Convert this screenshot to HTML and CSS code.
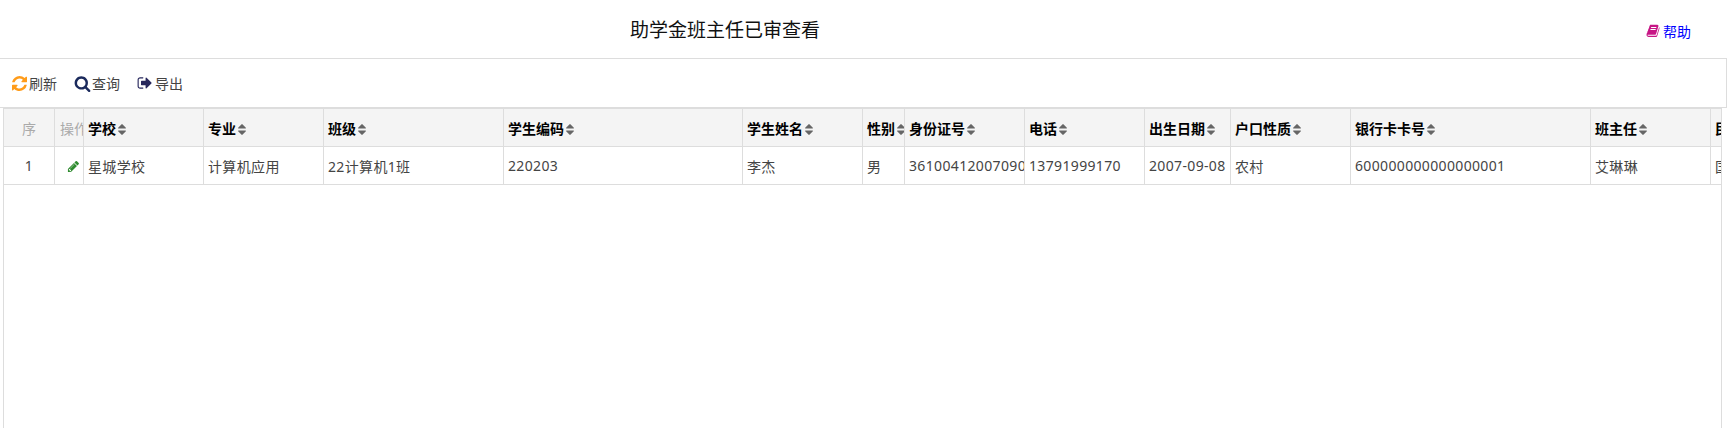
FILE: index.html
```html
<!DOCTYPE html>
<html lang="zh-CN">
  <head>
    <meta charset="utf-8" />
    <title>助学金班主任已审查看</title>
    <link rel="stylesheet" href="styles.css">
  </head>

  <body>
    <svg class="icon-defs" xmlns="http://www.w3.org/2000/svg">
      <symbol id="i-refresh" viewBox="0 0 1536 1536"><path d="M1511 928q0 5-1 7-64 268-268 434.5t-478 166.5q-146 0-282.5-55t-243.5-157l-129 129q-19 19-45 19t-45-19-19-45v-448q0-26 19-45t45-19h448q26 0 45 19t19 45-19 45l-137 137q71 66 161 102t187 36q134 0 250-65t186-179q11-17 53-117 8-23 30-23h192q13 0 22.5 9.5t9.5 22.5zm25-800v448q0 26-19 45t-45 19h-448q-26 0-45-19t-19-45 19-45l138-138q-148-137-349-137-134 0-250 65t-186 179q-11 17-53 117-8 23-30 23h-199q-13 0-22.5-9.5t-9.5-22.5v-7q65-268 270-434.5t480-166.5q146 0 284 55.5t245 156.5l130-129q19-19 45-19t45 19 19 45z"/></symbol>
      <symbol id="i-search" viewBox="0 0 1792 1792"><path d="M1216 832q0-185-131.5-316.5t-316.5-131.5-316.5 131.5-131.5 316.5 131.5 316.5 316.5 131.5 316.5-131.5 131.5-316.5zm512 832q0 52-38 90t-90 38q-54 0-90-38l-343-342q-179 124-399 124-143 0-273.5-55.5t-225-150-150-225-55.5-273.5 55.5-273.5 150-225 225-150 273.5-55.5 273.5 55.5 225 150 150 225 55.5 273.5q0 220-124 399l343 343q37 37 37 90z"/></symbol>
      <symbol id="i-export" viewBox="0 0 1792 1792"><path d="M704 1440q0 4 1 20t.5 26.5-3 23.5-10 19.5-20.5 6.5h-320q-119 0-203.5-84.5t-84.5-203.5v-704q0-119 84.5-203.5t203.5-84.5h320q13 0 22.5 9.5t9.5 22.5q0 4 1 20t.5 26.5-3 23.5-10 19.5-20.5 6.5h-320q-66 0-113 47t-47 113v704q0 66 47 113t113 47h312l11.5 1 11.5 3 8 5.5 7 9 2 13.5zm928-544q0 26-19 45l-544 544q-19 19-45 19t-45-19-19-45v-288h-448q-26 0-45-19t-19-45v-384q0-26 19-45t45-19h448v-288q0-26 19-45t45-19 45 19l544 544q19 19 19 45z"/></symbol>
      <symbol id="i-pencil" viewBox="0 0 1792 1792"><path d="M491 1536l91-91-235-235-91 91v107h128v128h107zm523-928q0-22-22-22-10 0-17 7l-542 542q-7 7-7 17 0 22 22 22 10 0 17-7l542-542q7-7 7-17zm-54-192l416 416-832 832h-416v-416zm683 96q0 53-37 90l-166 166-416-416 166-165q36-38 90-38 53 0 91 38l235 234q37 39 37 91z"/></symbol>
      <symbol id="i-book" viewBox="0 0 1792 1792"><path d="M1703 478q40 57 18 129l-275 906q-19 64-76.500 107.500t-122.500 43.500h-923q-77 0-148.500-53.500t-99.500-131.500q-24-67-2-127 0-4 3-27t4-37q1-8-3-21.500t-3-19.500q2-11 8-21t16.500-23.500 16.500-23.500q23-38 45-91.500t30-91.500q3-10 .5-30t-.5-28q3-11 17-28t17-23q21-36 42-92t25-90q1-9-2.500-32t.5-28q4-13 22-30.500t22-22.500q19-26 42.500-84.500t27.500-96.500q1-8-3-25.500t-2-26.500q2-8 9-18t18-23 17-21q8-12 16.500-35.500t15-44.500 17-45.500 20.500-37 28.500-27.500 37.500-12.500 46 5.500l-1 3q54-13 73-13h761q74 0 114 56t18 130l-274 906q-36 119-71.500 153.500t-128.500 34.500h-869q-27 0-38 15-11 16-1 43 24 70 144 70h923q29 0 56-15.500t35-41.500l300-987q7-22 5-57 38 15 59 43zm-1064 2q-4 13 2 22.500t20 9.500h608q13 0 25.500-9.500t16.500-22.500l21-64q4-13-2-22.500t-20-9.500h-608q-13 0-25.500 9.500t-16.500 22.500zm-83 256q-4 13 2 22.500t20 9.500h608q13 0 25.500-9.500t16.500-22.500l21-64q4-13-2-22.500t-20-9.500h-608q-13 0-25.500 9.500t-16.500 22.500z"/></symbol>
      <symbol id="i-sort" viewBox="384 192 1024 1408"><path d="M1408 1088q0 26-19 45l-448 448q-19 19-45 19t-45-19l-448-448q-19-19-19-45t19-45 45-19h896q26 0 45 19t19 45zm0-384q0 26-19 45t-45 19h-896q-26 0-45-19t-19-45 19-45l448-448q19-19 45-19t45 19l448 448q19 19 19 45z"/></symbol>
    </svg>

    <div class="title-bar">
      <h1 class="page-title">助学金班主任已审查看</h1>
      <a class="help-link" href="#"><svg class="icon icon-book"><use href="#i-book"/></svg>帮助</a>
    </div>

    <div class="toolbar">
      <a class="tool-btn" href="#"><svg class="icon icon-refresh"><use href="#i-refresh"/></svg>刷新</a>
      <a class="tool-btn" href="#"><svg class="icon icon-search"><use href="#i-search"/></svg>查询</a>
      <a class="tool-btn" href="#"><svg class="icon icon-export"><use href="#i-export"/></svg>导出</a>
    </div>

    <div class="grid-wrap">
      <table class="grid">
        <colgroup>
          <col class="col-seq">
          <col class="col-op">
          <col class="col-m">
          <col class="col-m">
          <col class="col-code">
          <col class="col-code-no">
          <col class="col-m">
          <col class="col-sex">
          <col class="col-m">
          <col class="col-m">
          <col class="col-date">
          <col class="col-m">
          <col class="col-l">
          <col class="col-m">
          <col class="col-m">
        </colgroup>
        <thead>
          <tr>
            <th class="plain center">序</th>
            <th class="plain">操作</th>
            <th>学校<svg class="sort"><use href="#i-sort"/></svg></th>
            <th>专业<svg class="sort"><use href="#i-sort"/></svg></th>
            <th>班级<svg class="sort"><use href="#i-sort"/></svg></th>
            <th>学生编码<svg class="sort"><use href="#i-sort"/></svg></th>
            <th>学生姓名<svg class="sort"><use href="#i-sort"/></svg></th>
            <th>性别<svg class="sort"><use href="#i-sort"/></svg></th>
            <th>身份证号<svg class="sort"><use href="#i-sort"/></svg></th>
            <th>电话<svg class="sort"><use href="#i-sort"/></svg></th>
            <th>出生日期<svg class="sort"><use href="#i-sort"/></svg></th>
            <th>户口性质<svg class="sort"><use href="#i-sort"/></svg></th>
            <th>银行卡卡号<svg class="sort"><use href="#i-sort"/></svg></th>
            <th>班主任<svg class="sort"><use href="#i-sort"/></svg></th>
            <th>民族<svg class="sort"><use href="#i-sort"/></svg></th>
          </tr>
        </thead>
        <tbody>
          <tr>
            <td class="center">1</td>
            <td class="op-cell"><svg class="icon icon-pencil"><use href="#i-pencil"/></svg></td>
            <td>星城学校</td>
            <td>计算机应用</td>
            <td>22计算机1班</td>
            <td>220203</td>
            <td>李杰</td>
            <td>男</td>
            <td>361004120070900001</td>
            <td>13791999170</td>
            <td>2007-09-08</td>
            <td>农村</td>
            <td>600000000000000001</td>
            <td>艾琳琳</td>
            <td>国家</td>
          </tr>
        </tbody>
      </table>
    </div>
  </body>
</html>
```

FILE: styles.css
```css
html, body {
  height: 100%;
}

body {
  margin: 0;
  display: flex;
  flex-direction: column;
  overflow: hidden;
  font-family: "Noto Sans", "Noto Sans CJK SC", sans-serif;
  font-size: 14px;
  color: #444;
  background-color: #fff;
}

a {
  text-decoration: none;
  color: inherit;
}

.icon-defs {
  display: none;
}

.icon {
  fill: currentColor;
}

.title-bar {
  display: flex;
  align-items: center;
  justify-content: space-between;
  height: 58px;
  padding-right: 36px;
  flex-shrink: 0;
}

.page-title {
  width: 1450px;
  margin: 0;
  font-size: 19px;
  font-weight: normal;
  color: #111;
  text-align: center;
}

.help-link {
  display: flex;
  align-items: center;
  margin-top: 3px;
  color: #00f;
}

.icon-book {
  width: 14px;
  height: 14px;
  margin-right: 3px;
  color: #c71585;
}

.toolbar {
  display: flex;
  align-items: center;
  gap: 17px;
  height: 48px;
  padding-left: 12px;
  flex-shrink: 0;
  border-top: 1px solid #ddd;
  border-right: 1px solid #ddd;
  border-bottom: 1px solid #ddd;
}

.tool-btn {
  display: flex;
  align-items: center;
}

.tool-btn .icon {
  margin-right: 2px;
}

.icon-refresh {
  width: 15px;
  height: 15px;
  color: #ff9c1a;
}

.tool-btn .icon-search {
  width: 17px;
  height: 17px;
  margin-right: 1px;
  color: #1b2a5c;
}

.icon-export {
  width: 16px;
  height: 16px;
  color: #27275c;
}

.grid-wrap {
  flex: 1;
  width: 1717px;
  margin-left: 3px;
  overflow: hidden;
  border-top: 1px solid #ddd;
  border-left: 1px solid #ddd;
  border-right: 1px solid #ddd;
}

.grid {
  table-layout: fixed;
  width: 1827px;
  border-collapse: separate;
  border-spacing: 0;
}

.col-seq { width: 51px; }
.col-op { width: 29px; }
.col-m { width: 120px; }
.col-code { width: 180px; }
.col-code-no { width: 239px; }
.col-l { width: 240px; }
.col-sex { width: 42px; }
.col-date { width: 86px; }

.grid th,
.grid td {
  padding: 0 0 0 4px;
  box-sizing: border-box;
  border-right: 1px solid #ddd;
  border-bottom: 1px solid #ddd;
  overflow: hidden;
  white-space: nowrap;
  text-align: left;
  font-weight: normal;
}

.grid td {
  height: 38px;
  letter-spacing: 0.35px;
}

.grid th {
  height: 38px;
  background-color: #f4f4f4;
  color: #000;
  font-weight: bold;
}

.grid th.plain {
  color: #aaa;
  font-weight: normal;
}

.grid th.plain:nth-child(2) {
  padding-left: 5px;
}

.grid .center {
  text-align: center;
  padding-left: 0;
}

.grid .op-cell {
  padding-left: 12px;
}

.sort {
  width: 8px;
  height: 11px;
  margin-left: 2px;
  vertical-align: -1px;
  fill: #666;
}

.icon-pencil {
  display: block;
  width: 13px;
  height: 13px;
  margin-top: 1px;
  color: #2e8b2e;
}
```
